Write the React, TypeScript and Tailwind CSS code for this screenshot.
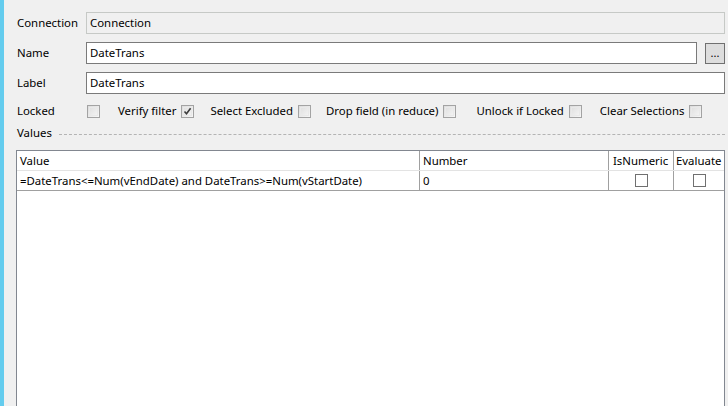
import React from "react";

const font = { fontFamily: '"Segoe UI", "Noto Sans", "Open Sans", sans-serif' };

function FormCheck({ checked }: { checked?: boolean }) {
  return (
    <span className="relative inline-block w-[13px] h-[13px] border border-[#a3a3a3] bg-gradient-to-br from-[#dcdcdc] to-[#f7f7f7] shrink-0">
      <span className="absolute inset-[1px] border border-[#e9e9e9]" />
      {checked && (
        <svg className="absolute inset-0" width="11" height="11" viewBox="0 0 11 11">
          <path d="M2.5 5.5 L4.5 7.8 L8.6 2.2" fill="none" stroke="#3c3c3c" strokeWidth="1.6" />
        </svg>
      )}
    </span>
  );
}

function Option({ label, checked, className }: { label: string; checked?: boolean; className?: string }) {
  return (
    <div className={"flex items-center gap-[5px] shrink-0 whitespace-nowrap " + (className ?? "")}>
      <span>{label}</span>
      <FormCheck checked={checked} />
    </div>
  );
}

function GridCheck() {
  return <span className="inline-block w-[13px] h-[13px] border border-[#707070] bg-white" />;
}

export default function App() {
  return (
    <div
      className="w-[728px] h-[406px] overflow-hidden bg-[#f0f0f0] flex text-[11.4px] leading-[16px] text-black"
      style={font}
    >
      <div className="w-[4px] h-full bg-[#64ccee] shrink-0" />

      <div className="flex-1 flex flex-col pt-[12px] pl-[12px] pr-[3px] min-w-0">
        {/* Connection */}
        <div className="flex items-center h-[22px]">
          <span className="w-[70px] shrink-0 pl-[1px]">Connection</span>
          <div className="flex-1 h-[22px] border border-[#c6c9c6] bg-[#f0f0f0] px-[3px] flex items-center">
            Connection
          </div>
        </div>

        {/* Name */}
        <div className="flex items-center h-[22px] mt-[8px]">
          <span className="w-[70px] shrink-0 pl-[1px]">Name</span>
          <div className="flex-1 h-[22px] border border-[#7a7a7a] bg-white px-[3px] flex items-center">
            DateTrans
          </div>
          <button className="ml-[8px] w-[20px] h-[21px] border border-[#707070] bg-[#dddddd] flex items-center justify-center text-[11px] leading-none pb-[2px]">
            ...
          </button>
        </div>

        {/* Label */}
        <div className="flex items-center h-[22px] mt-[8px]">
          <span className="w-[70px] shrink-0 pl-[1px]">Label</span>
          <div className="flex-1 h-[22px] border border-[#7a7a7a] bg-white px-[3px] flex items-center">
            DateTrans
          </div>
        </div>

        {/* Options */}
        <div className="flex items-center h-[16px] mt-[9px] pl-[1px] whitespace-nowrap">
          <span className="w-[70px] shrink-0">Locked</span>
          <FormCheck />
          <Option label="Verify filter" checked className="ml-[18px]" />
          <Option label="Select Excluded" className="ml-[16px]" />
          <Option label="Drop field (in reduce)" className="ml-[15px]" />
          <Option label="Unlock if Locked" className="ml-[20px]" />
          <Option label="Clear Selections" className="ml-[18px]" />
        </div>

        {/* Values header */}
        <div className="flex items-center h-[16px] mt-[6px] pl-[1px]">
          <span>Values</span>
          <div className="flex-1 ml-[7px] border-t border-dashed border-[#b4b4b4] mt-[3px]" />
        </div>

        {/* Values table */}
        <div className="mt-[9px] w-[709px] flex-1 border-l border-t border-r border-[#828790] bg-white">
          <div className="flex h-[20px] border-b border-[#e3e3e3]">
            <div className="w-[403px] border-r border-[#a0a0a0] pl-[3px] flex items-center">Value</div>
            <div className="w-[189px] border-r border-[#a0a0a0] pl-[3px] flex items-center">Number</div>
            <div className="w-[65px] border-r border-[#a0a0a0] pl-[4px] flex items-center">IsNumeric</div>
            <div className="w-[50px] pl-[2px] flex items-center">Evaluate</div>
          </div>
          <div className="flex h-[20px] border-b border-[#a0a0a0]">
            <div className="w-[403px] border-r border-[#a0a0a0] pl-[3px] flex items-center whitespace-nowrap overflow-hidden">
              =DateTrans&lt;=Num(vEndDate) and DateTrans&gt;=Num(vStartDate)
            </div>
            <div className="w-[189px] border-r border-[#a0a0a0] pl-[3px] flex items-center">0</div>
            <div className="w-[65px] border-r border-[#a0a0a0] flex items-center justify-center">
              <GridCheck />
            </div>
            <div className="w-[50px] flex items-center justify-center">
              <GridCheck />
            </div>
          </div>
        </div>
      </div>
    </div>
  );
}
